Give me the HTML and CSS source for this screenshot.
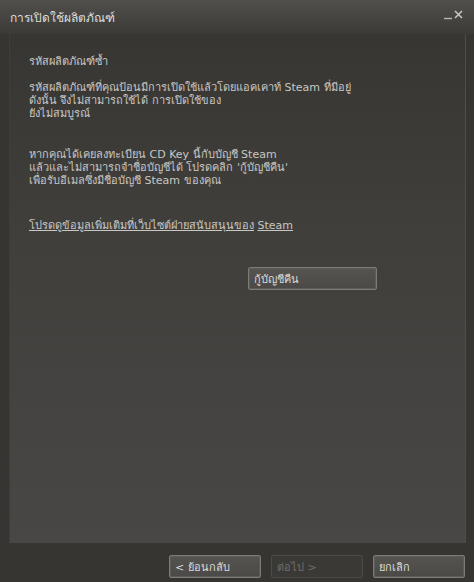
FILE: index.html
```html
<!DOCTYPE html>
<html lang="th">
<head>
<meta charset="utf-8">
<link rel="stylesheet" href="styles.css">
</head>
<body>
<div class="window">
  <div class="titlebar">
    <span class="title">การเปิดใช้ผลิตภัณฑ์</span>
    <div class="controls">
      <svg width="22" height="14" viewBox="0 0 22 14"><path d="M1 9.5h8" stroke="#b8b8b6" stroke-width="1.4"/><path d="M12 2l7 7M19 2l-7 7" stroke="#c8c8c6" stroke-width="1.5"/></svg>
    </div>
  </div>
  <div class="panel">
    <p class="heading">รหัสผลิตภัณฑ์ซ้ำ</p>
    <p class="para">รหัสผลิตภัณฑ์ที่คุณป้อนมีการเปิดใช้แล้วโดยแอคเคาท์ Steam ที่มีอยู่<br>ดังนั้น จึงไม่สามารถใช้ได้ การเปิดใช้ของ<br>ยังไม่สมบูรณ์</p>
    <p class="para second">หากคุณได้เคยลงทะเบียน CD Key นี้กับบัญชี Steam<br>แล้วและไม่สามารถจำชื่อบัญชีได้ โปรดคลิก 'กู้บัญชีคืน'<br>เพื่อรับอีเมลซึ่งมีชื่อบัญชี Steam ของคุณ</p>
    <p class="link"><span class="u">โปรดดูข้อมูลเพิ่มเติมที่เว็บไซต์ฝ่ายสนับสนุนของ</span> <span class="u">Steam</span></p>
    <div class="recover-row"><button class="btn recover">กู้บัญชีคืน</button></div>
  </div>
  <div class="footer">
    <button class="btn">&lt; ย้อนกลับ</button>
    <button class="btn disabled">ต่อไป &gt;</button>
    <button class="btn">ยกเลิก</button>
  </div>
</div>
</body>
</html>
```

FILE: styles.css
```css
html, body {
  margin: 0;
  padding: 0;
  background: #363532;
}
body {
  width: 474px;
  height: 582px;
  overflow: hidden;
  font-family: Tahoma, "DejaVu Sans", "Noto Sans", sans-serif;
  font-size: 11px;
  color: #c8c7c4;
}
.window {
  width: 474px;
  height: 582px;
  display: flex;
  flex-direction: column;
  background: #363532;
}
.titlebar {
  height: 34px;
  flex: none;
  display: flex;
  align-items: flex-start;
  justify-content: space-between;
  padding: 0 9px 0 10px;
  background: linear-gradient(#504f4c 0px, #3b3a37 34px);
}
.title {
  margin-top: 8px;
  font-size: 12px;
  color: #dedddb;
}
.controls {
  margin-top: 9px;
}
.panel {
  flex: 1;
  margin: 0 8px 0 9px;
  padding: 21px 20px 0 20px;
  background: linear-gradient(#373633 0%, #403f3c 40%, #484745 100%);
  border-right: 1px solid #4e4d4a;
  box-shadow: inset 1px 0 0 #3e3d3a;
}
p { margin: 0; }
.heading { line-height: 14px; }
.para { margin-top: 12px; line-height: 13px; }
.para.second { margin-top: 28px; }
.link { margin-top: 32px; line-height: 13px; }
.u { text-decoration: underline; }
.recover-row {
  margin-top: 35px;
  padding-left: 219px;
}
.btn {
  font-family: inherit;
  font-size: 11px;
  color: #dcdbd8;
  text-align: left;
  padding: 0 0 0 5px;
  height: 23px;
  border: 1px solid #7c7b77;
  border-radius: 2px;
  background: linear-gradient(#55544f, #4a4945);
  box-shadow: inset 0 0 0 1px #5c5b57;
}
.recover {
  width: 129px;
}
.footer {
  height: 39px;
  flex: none;
  display: flex;
  gap: 10px;
  justify-content: flex-end;
  align-items: flex-start;
  padding: 12px 9px 0 0;
  box-sizing: border-box;
}
.footer .btn {
  width: 92px;
}
.btn.disabled {
  color: #6e6d69;
  border-color: #4c4b48;
  background: #3a3936;
  box-shadow: none;
}
```
